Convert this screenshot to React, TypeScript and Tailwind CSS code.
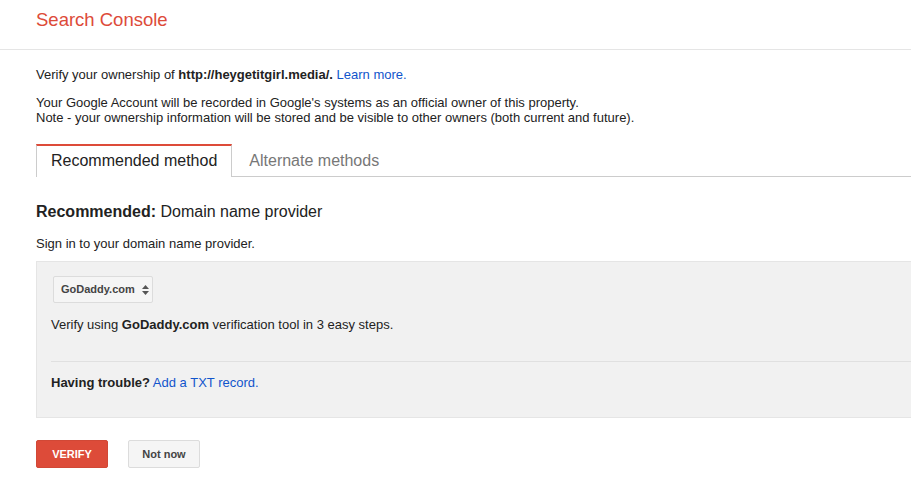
export default function App() {
  return (
    <div className="min-h-screen bg-white text-[#222] font-['Liberation_Sans',Arial,sans-serif] overflow-hidden">
      <header className="h-[50px] border-b border-[#e5e5e5] pl-[36px] pt-[8px]">
        <h1 className="text-[18.5px] leading-[24px] text-[#dd4b39]">Search Console</h1>
      </header>

      <main className="pl-[36px]">
        <p className="mt-[17px] text-[13px] leading-[16px]">
          Verify your ownership of <b>http://heygetitgirl.media/.</b>{' '}
          <a className="text-[#1155cc]">Learn more.</a>
        </p>
        <p className="mt-[12px] text-[13px] leading-[15px]">
          Your Google Account will be recorded in Google's systems as an official owner of this property.
          <br />
          Note - your ownership information will be stored and be visible to other owners (both current and future).
        </p>

        <div className="mt-[19px] flex border-b border-[#ccc]">
          <div className="h-[33px] -mb-px bg-white border-t-2 border-t-[#dd4b39] border-x border-x-[#ccc] px-[14px] pt-[5px] text-[16px] leading-[20px] text-[#222]">
            Recommended method
          </div>
          <div className="px-[17px] pt-[7px] text-[16px] leading-[20px] text-[#777]">Alternate methods</div>
        </div>

        <h2 className="mt-[25px] text-[16px] leading-[20px]">
          <b>Recommended:</b> Domain name provider
        </h2>
        <p className="mt-[14px] text-[13px] leading-[16px]">Sign in to your domain name provider.</p>

        <section className="mt-[9px] h-[157px] bg-[#f1f1f1] border border-r-0 border-[#e5e5e5] pl-[14px]">
          <div className="mt-[14px] ml-[2px] inline-flex h-[27px] w-[100px] items-center gap-[6px] rounded-[2px] border border-[#dcdcdc] bg-[#f5f5f5] pl-[7px] text-[11px] font-bold text-[#444]">
            GoDaddy.com
            <svg width="9" height="12" viewBox="0 0 9 12" className="fill-[#555]">
              <path d="M4.5 1 L8 5 H1 Z" />
              <path d="M4.5 11 L8 7 H1 Z" />
            </svg>
          </div>
          <p className="mt-[14px] text-[13px] leading-[16px]">
            Verify using <b>GoDaddy.com</b> verification tool in 3 easy steps.
          </p>
          <div className="mt-[28px] border-t border-[#e0e0e0]" />
          <p className="mt-[13px] text-[13px] leading-[16px]">
            <b>Having trouble?</b> <a className="text-[#1155cc]">Add a TXT record.</a>
          </p>
        </section>

        <div className="mt-[22px] flex gap-[20px]">
          <button className="h-[28px] w-[72px] rounded-[2px] bg-[#dd4b39] border border-[#d14836] text-[11px] font-bold text-white">
            VERIFY
          </button>
          <button className="h-[28px] w-[72px] rounded-[2px] bg-[#f5f5f5] border border-[#dcdcdc] text-[11px] font-bold text-[#444]">
            Not now
          </button>
        </div>
      </main>
    </div>
  );
}
